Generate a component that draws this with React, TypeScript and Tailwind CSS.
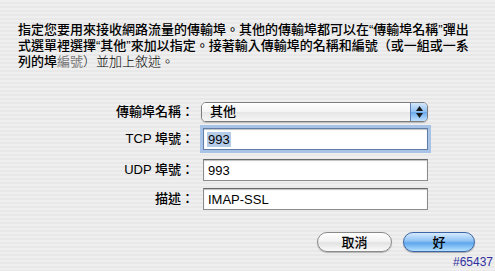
const font = "font-['Liberation_Sans','Noto_Sans_CJK_TC',sans-serif]"

function TextField({ value, focused }: { value: string; focused?: boolean }) {
  return (
    <div
      className={
        "h-[22px] w-[225px] bg-white border flex items-center pl-[3px] shadow-[inset_0_1px_1px_rgba(0,0,0,0.25)] " +
        (focused
          ? "border-[#5f7fa9] ring-[3px] ring-[#a9c3e6]"
          : "border-[#8c8c8c] border-t-[#6a6a6a]")
      }
    >
      <span className={"px-[1px] leading-[15px] " + (focused ? "bg-[#b5cce9]" : "")}>{value}</span>
    </div>
  )
}

function PopupButton({ value }: { value: string }) {
  return (
    <div className="h-[20px] w-[227px] flex rounded-[5px] border border-[#7d7d7d] overflow-hidden shadow-[0_1px_1px_rgba(0,0,0,0.2)]">
      <div className="flex-1 flex items-center pl-[8px] bg-[linear-gradient(180deg,#ffffff_0%,#f4f4f4_50%,#e6e6e6_51%,#f6f6f6_100%)]">
        {value}
      </div>
      <div className="w-[17px] flex flex-col items-center justify-center gap-[2px] border-l border-[#5b7fb5] bg-[linear-gradient(180deg,#d3e7fb_0%,#8fc0f2_50%,#6aa9ea_51%,#bfe0ff_100%)]">
        <svg width="7" height="5" viewBox="0 0 7 5">
          <path d="M3.5 0 L7 5 L0 5 Z" fill="#1a1a1a" />
        </svg>
        <svg width="7" height="5" viewBox="0 0 7 5">
          <path d="M0 0 L7 0 L3.5 5 Z" fill="#1a1a1a" />
        </svg>
      </div>
    </div>
  )
}

function Row({ label, className, children }: { label: string; className: string; children: React.ReactNode }) {
  return (
    <div className={"flex items-center " + className}>
      <div className="w-[197px] pr-[3px] text-right">{label}</div>
      {children}
    </div>
  )
}

export default function App() {
  return (
    <div
      className={
        "w-[495px] h-[271px] overflow-hidden text-[13px] font-medium text-black bg-[repeating-linear-gradient(180deg,#efefef_0px,#efefef_2px,#e8e8e8_2px,#e8e8e8_4px)] " +
        font
      }
    >
      <p className="pt-[22px] pl-[18px] leading-[16px] whitespace-nowrap">
        指定您要用來接收網路流量的傳輸埠。其他的傳輸埠都可以在“傳輸埠名稱”彈出
        <br />
        式選單裡選擇“其他”來加以指定。接著輸入傳輸埠的名稱和編號（或一組或一系
        <br />
        列的埠<span className="text-[#777] font-normal">編號</span>
        <span className="font-light">）並加上敘述。</span>
      </p>

      <div className="mt-[32px] flex flex-col">
        <Row label="傳輸埠名稱：" className="h-[20px]">
          <div className="pl-[4px]">
            <PopupButton value="其他" />
          </div>
        </Row>
        <Row label="TCP 埠號：" className="h-[22px] mt-[6px]">
          <div className="pl-[6px]">
            <TextField value="993" focused />
          </div>
        </Row>
        <Row label="UDP 埠號：" className="h-[22px] mt-[9px]">
          <div className="pl-[6px]">
            <TextField value="993" />
          </div>
        </Row>
        <Row label="描述：" className="h-[22px] mt-[7px]">
          <div className="pl-[6px]">
            <TextField value="IMAP-SSL" />
          </div>
        </Row>
      </div>

      <div className="mt-[22px] flex justify-end gap-[11px] pr-[20px]">
        <button className="h-[20px] w-[75px] rounded-full border border-[#8a8a8a] bg-[linear-gradient(180deg,#ffffff_0%,#f3f3f3_45%,#e2e2e2_55%,#fbfbfb_100%)] shadow-[0_1px_1px_rgba(0,0,0,0.25)] flex items-center justify-center leading-none">
          取消
        </button>
        <button className="h-[20px] w-[72px] rounded-full border border-[#3d66a8] bg-[linear-gradient(180deg,#d6ebfd_0%,#8dc2f4_45%,#5ea6ec_55%,#b3e0ff_100%)] shadow-[0_1px_1px_rgba(0,0,0,0.3)] flex items-center justify-center leading-none">
          好
        </button>
      </div>

      <div className="mt-[4px] pr-[2px] text-right text-[12px] font-normal leading-[12px] text-[#2f2fa0]">#65437</div>
    </div>
  )
}
